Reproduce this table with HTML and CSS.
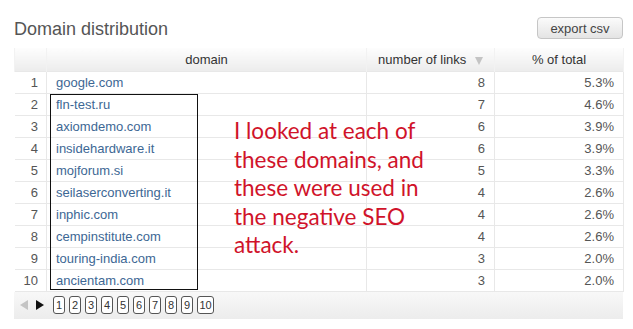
FILE: index.html
```html
<!DOCTYPE html>
<html>
<head>
<meta charset="utf-8">
<link rel="stylesheet" href="styles.css">
</head>
<body>
<div class="page">
  <div class="top">
    <h1 class="title">Domain distribution</h1>
    <button class="export">export csv</button>
  </div>
  <table class="grid">
    <thead>
      <tr>
        <th class="c-num"></th>
        <th class="c-dom">domain</th>
        <th class="c-links">number of links <span class="sort"></span></th>
        <th class="c-pct">% of total</th>
      </tr>
    </thead>
    <tbody>
      <tr><td class="c-num">1</td><td class="c-dom"><a>google.com</a></td><td class="c-links">8</td><td class="c-pct">5.3%</td></tr>
      <tr><td class="c-num">2</td><td class="c-dom"><a>fln-test.ru</a></td><td class="c-links">7</td><td class="c-pct">4.6%</td></tr>
      <tr><td class="c-num">3</td><td class="c-dom"><a>axiomdemo.com</a></td><td class="c-links">6</td><td class="c-pct">3.9%</td></tr>
      <tr><td class="c-num">4</td><td class="c-dom"><a>insidehardware.it</a></td><td class="c-links">6</td><td class="c-pct">3.9%</td></tr>
      <tr><td class="c-num">5</td><td class="c-dom"><a>mojforum.si</a></td><td class="c-links">5</td><td class="c-pct">3.3%</td></tr>
      <tr><td class="c-num">6</td><td class="c-dom"><a>seilaserconverting.it</a></td><td class="c-links">4</td><td class="c-pct">2.6%</td></tr>
      <tr><td class="c-num">7</td><td class="c-dom"><a>inphic.com</a></td><td class="c-links">4</td><td class="c-pct">2.6%</td></tr>
      <tr><td class="c-num">8</td><td class="c-dom"><a>cempinstitute.com</a></td><td class="c-links">4</td><td class="c-pct">2.6%</td></tr>
      <tr><td class="c-num">9</td><td class="c-dom"><a>touring-india.com</a></td><td class="c-links">3</td><td class="c-pct">2.0%</td></tr>
      <tr><td class="c-num">10</td><td class="c-dom"><a>ancientam.com</a></td><td class="c-links">3</td><td class="c-pct">2.0%</td></tr>
    </tbody>
  </table>
  <div class="pager">
    <div class="arrows">
      <span class="arr prev"></span>
      <span class="arr next"></span>
    </div>
    <div class="pages">
      <span class="pg">1</span><span class="pg">2</span><span class="pg">3</span><span class="pg">4</span><span class="pg">5</span><span class="pg">6</span><span class="pg">7</span><span class="pg">8</span><span class="pg">9</span><span class="pg wide">10</span>
    </div>
  </div>
  <div class="mark"></div>
  <p class="note">I looked at each of<br>these domains, and<br>these were used in<br>the negative SEO<br>attack.</p>
</div>
</body>
</html>
```
FILE: styles.css
```css
html, body {
  margin: 0;
  padding: 0;
  background: #fff;
}
.page {
  position: relative;
  width: 633px;
  height: 329px;
  padding: 0 10px 0 14px;
  box-sizing: border-box;
  font-family: "Liberation Sans", Arial, sans-serif;
}
.top {
  display: flex;
  justify-content: space-between;
  align-items: flex-start;
  height: 48px;
}
.title {
  margin: 18px 0 0 0;
  font-size: 18px;
  line-height: 22px;
  font-weight: normal;
  color: #555;
}
.export {
  margin-top: 17px;
  width: 86px;
  height: 22px;
  padding: 0;
  border: 1px solid #c6c6c6;
  border-radius: 4px;
  background: linear-gradient(#fbfbfb, #e4e4e4);
  font-family: "Liberation Sans", Arial, sans-serif;
  font-size: 13px;
  color: #444;
}
.grid {
  width: 609px;
  border-collapse: collapse;
  table-layout: fixed;
  font-size: 13px;
}
.grid th {
  height: 23px;
  padding: 0;
  font-weight: normal;
  color: #333;
  background: linear-gradient(#fdfdfd, #ececec);
  border-left: 1px solid #f2f2f2;
  border-right: 1px solid #f2f2f2;
  text-align: center;
}
.grid td {
  height: 22px;
  padding: 0;
  border: 1px solid #e8e8e8;
  color: #555;
}
.grid tr td:first-child { border-left: none; }
.grid .c-num { width: 32px; text-align: right; padding-right: 8px; box-sizing: border-box; }
.grid th.c-num { padding: 0; }
.grid .c-dom { width: 320px; text-align: left; padding-left: 9px; box-sizing: border-box; }
.grid th.c-dom { text-align: center; padding: 0; }
.grid .c-links { width: 128px; text-align: right; padding-right: 9px; box-sizing: border-box; }
.grid th.c-links { text-align: center; padding: 0; }
.grid .c-pct { width: 129px; text-align: right; padding-right: 9px; box-sizing: border-box; }
.grid th.c-pct { text-align: center; padding: 0; }
.grid a { color: #3d6794; text-decoration: none; }
.sort {
  display: inline-block;
  width: 0;
  height: 0;
  margin-left: 5px;
  border-left: 4px solid transparent;
  border-right: 4px solid transparent;
  border-top: 8px solid #c4c4c4;
  vertical-align: -1px;
}
.pager {
  display: flex;
  align-items: center;
  width: 609px;
  height: 27px;
  margin-top: 0;
  background: linear-gradient(#f8f8f8, #ececec);
}
.arrows {
  display: flex;
  align-items: center;
  gap: 8px;
  margin-left: 6px;
  width: 32px;
}
.arr {
  width: 0;
  height: 0;
  border-top: 5px solid transparent;
  border-bottom: 5px solid transparent;
}
.prev { border-right: 8px solid #c4c4c4; }
.next { border-left: 8px solid #111; }
.pages {
  display: flex;
  gap: 4px;
  margin-left: 1px;
}
.pg {
  box-sizing: border-box;
  width: 12px;
  height: 18px;
  border: 1px solid #555;
  border-radius: 3px;
  background: #fff;
  font-size: 11px;
  line-height: 16px;
  text-align: center;
  color: #333;
}
.pg.wide { width: 17px; }
.mark {
  position: absolute;
  left: 50px;
  top: 94px;
  width: 148px;
  height: 196px;
  border: 1.5px solid #111;
  box-sizing: border-box;
}
.note {
  position: absolute;
  left: 234px;
  top: 117px;
  margin: 0;
  font-family: Lato, "Open Sans", sans-serif;
  font-size: 22.5px;
  line-height: 28.5px;
  color: #d0132a;
}
```
